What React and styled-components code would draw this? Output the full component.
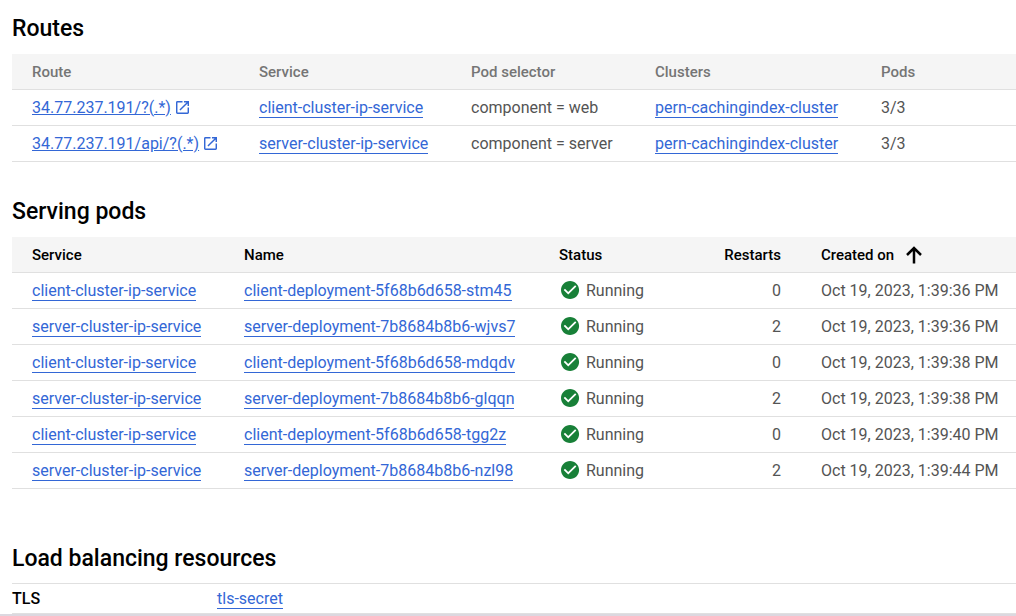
import React from "react";
import styled, { createGlobalStyle } from "styled-components";

const GlobalStyle = createGlobalStyle`
  * { box-sizing: border-box; }
  body {
    margin: 0;
    background: #fff;
    color: #545454;
    font: 400 16px/20px Roboto, sans-serif;
  }
`;

const Page = styled.main`
  padding: 13px 0 0 12px;
`;

const Section = styled.section`
  margin-bottom: ${(p) => p.$gap || 0}px;
`;

const Heading = styled.h2`
  margin: 0;
  padding-bottom: ${(p) => (p.$tight ? 8 : 9)}px;
  color: #000;
  font-size: 23px;
  font-weight: 500;
  line-height: 32px;
`;

const Table = styled.table`
  width: 100%;
  table-layout: fixed;
  border-collapse: separate;
  border-spacing: 0;
`;

const Col = styled.col`
  width: ${(p) => (p.$width ? `${p.$width}px` : "auto")};
`;

const HeaderCell = styled.th`
  height: 36px;
  padding: 0 0 0 20px;
  background: #f5f5f5;
  border-bottom: 1px solid #e0e0e0;
  color: ${(p) => (p.$muted ? "#757575" : "#000")};
  font-size: 15px;
  font-weight: 500;
  text-align: left;
  white-space: nowrap;
`;

const Cell = styled.td`
  height: 36px;
  padding: 0 0 0 20px;
  border-bottom: 1px solid #e0e0e0;
  white-space: nowrap;
`;

const NumberHeader = styled(HeaderCell)`
  padding-right: 20px;
  text-align: right;
`;

const NumberCell = styled(Cell)`
  padding-right: 20px;
  text-align: right;
`;

const Link = styled.a`
  display: inline-block;
  padding-top: 2px;
  border-bottom: 1px solid #3367d6;
  color: #3367d6;
  line-height: 18px;
  text-decoration: none;
  vertical-align: top;
`;

const ExternalLink = styled.a`
  display: inline-flex;
  align-items: center;
  gap: 5px;
  color: #3367d6;
  vertical-align: top;
`;

const SortButton = styled.button`
  display: inline-flex;
  align-items: center;
  gap: 8px;
  padding: 0;
  border: 0;
  background: none;
  color: inherit;
  font: inherit;
  cursor: pointer;
`;

const Status = styled.span`
  display: flex;
  align-items: center;
  gap: 6px;
  padding-left: 2px;
`;

const Icon = styled.svg`
  flex: none;
  display: block;
`;

const ResourceTable = styled(Table)`
  border-top: 1px solid #e0e0e0;
`;

const ResourceName = styled.th`
  height: 30px;
  padding: 0;
  border-bottom: 1px solid #e0e0e0;
  color: #000;
  font-weight: 500;
  text-align: left;
`;

const ResourceValue = styled.td`
  height: 30px;
  padding: 0;
  border-bottom: 1px solid #e0e0e0;
`;

const BottomBand = styled.footer`
  height: 2px;
  background: #dcd8e0;
`;

const OpenIcon = () => (
  <Icon width="13" height="13" viewBox="3 3 18 18" fill="#3367d6" aria-hidden="true">
    <path d="M19 19H5V5h7V3H5a2 2 0 0 0-2 2v14a2 2 0 0 0 2 2h14c1.100 0 2-.9 2-2v-7h-2v7zM14 3v2h3.590l-9.830 9.830 1.410 1.410L19 6.410V10h2V3h-7z" />
  </Icon>
);

const CheckIcon = () => (
  <Icon width="19" height="19" viewBox="2 2 21 21" fill="#188038" aria-hidden="true">
    <path d="M12 2C6.480 2 2 6.480 2 12s4.480 10 10 10 10-4.480 10-10S17.520 2 12 2zm-2 15l-5-5 1.410-1.410L10 14.170l7.590-7.590L19 8l-9 9z" />
  </Icon>
);

const ArrowUpIcon = () => (
  <Icon width="24" height="24" viewBox="0 0 24 24" fill="none" stroke="#000" strokeWidth="2.500" aria-hidden="true">
    <path d="M12 20.500V5M5 12l7-7 7 7" />
  </Icon>
);

const routes = [
  { path: "34.77.237.191/?(.*)", service: "client-cluster-ip-service", selector: "component = web" },
  { path: "34.77.237.191/api/?(.*)", service: "server-cluster-ip-service", selector: "component = server" },
];

const pods = [
  { kind: "client", id: "5f68b6d658-stm45", restarts: 0, time: "1:39:36" },
  { kind: "server", id: "7b8684b8b6-wjvs7", restarts: 2, time: "1:39:36" },
  { kind: "client", id: "5f68b6d658-mdqdv", restarts: 0, time: "1:39:38" },
  { kind: "server", id: "7b8684b8b6-glqqn", restarts: 2, time: "1:39:38" },
  { kind: "client", id: "5f68b6d658-tgg2z", restarts: 0, time: "1:39:40" },
  { kind: "server", id: "7b8684b8b6-nzl98", restarts: 2, time: "1:39:44" },
];

export default function App() {
  return (
    <>
      <GlobalStyle />
      <Page>
        <Section $gap={34}>
          <Heading>Routes</Heading>
          <Table>
            <colgroup>
              <Col $width={227} />
              <Col $width={212} />
              <Col $width={184} />
              <Col $width={226} />
              <Col />
            </colgroup>
            <thead>
              <tr>
                {["Route", "Service", "Pod selector", "Clusters", "Pods"].map((title) => (
                  <HeaderCell key={title} scope="col" $muted>{title}</HeaderCell>
                ))}
              </tr>
            </thead>
            <tbody>
              {routes.map((route) => (
                <tr key={route.path}>
                  <Cell>
                    <ExternalLink href="#route">{route.path}<OpenIcon /></ExternalLink>
                  </Cell>
                  <Cell><Link href="#service">{route.service}</Link></Cell>
                  <Cell>{route.selector}</Cell>
                  <Cell><Link href="#cluster">pern-cachingindex-cluster</Link></Cell>
                  <Cell>3/3</Cell>
                </tr>
              ))}
            </tbody>
          </Table>
        </Section>

        <Section $gap={54}>
          <Heading>Serving pods</Heading>
          <Table>
            <colgroup>
              <Col $width={212} />
              <Col $width={315} />
              <Col $width={150} />
              <Col $width={112} />
              <Col />
            </colgroup>
            <thead>
              <tr>
                <HeaderCell scope="col">Service</HeaderCell>
                <HeaderCell scope="col">Name</HeaderCell>
                <HeaderCell scope="col">Status</HeaderCell>
                <NumberHeader scope="col">Restarts</NumberHeader>
                <HeaderCell scope="col" aria-sort="ascending">
                  <SortButton type="button">Created on<ArrowUpIcon /></SortButton>
                </HeaderCell>
              </tr>
            </thead>
            <tbody>
              {pods.map((pod) => (
                <tr key={pod.id}>
                  <Cell><Link href="#service">{`${pod.kind}-cluster-ip-service`}</Link></Cell>
                  <Cell><Link href="#pod">{`${pod.kind}-deployment-${pod.id}`}</Link></Cell>
                  <Cell><Status><CheckIcon />Running</Status></Cell>
                  <NumberCell>{pod.restarts}</NumberCell>
                  <Cell>{`Oct 19, 2023, ${pod.time} PM`}</Cell>
                </tr>
              ))}
            </tbody>
          </Table>
        </Section>

        <Section>
          <Heading $tight>Load balancing resources</Heading>
          <ResourceTable>
            <colgroup>
              <Col $width={205} />
              <Col />
            </colgroup>
            <tbody>
              <tr>
                <ResourceName scope="row">TLS</ResourceName>
                <ResourceValue><Link href="#tls-secret">tls-secret</Link></ResourceValue>
              </tr>
            </tbody>
          </ResourceTable>
        </Section>
      </Page>
      <BottomBand />
    </>
  );
}
